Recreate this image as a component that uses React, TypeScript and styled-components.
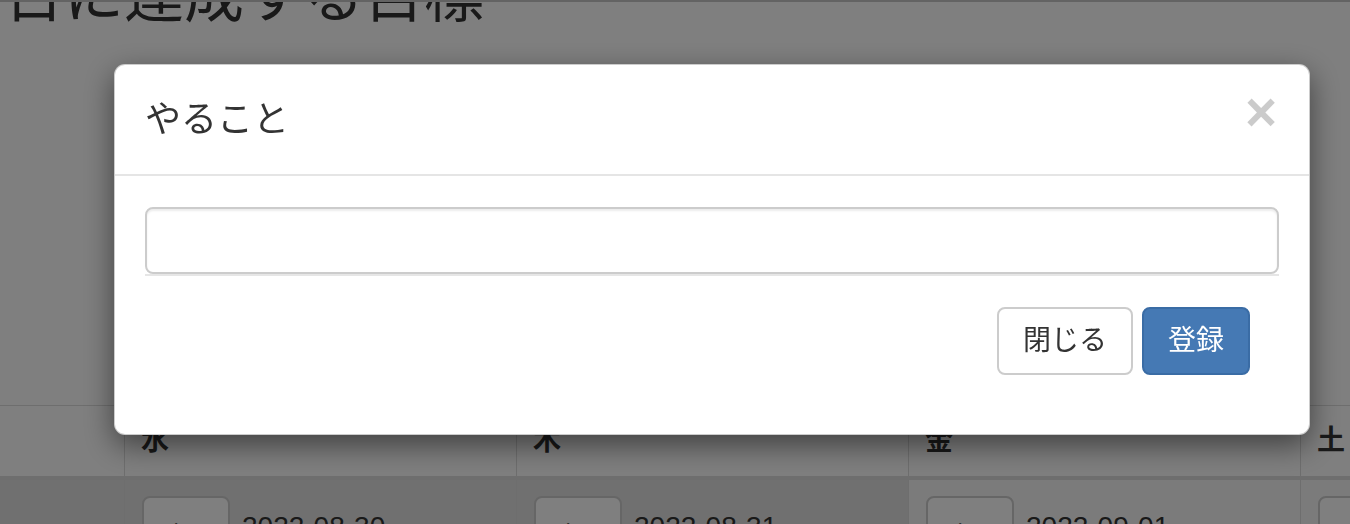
import React from "react";
import styled, { createGlobalStyle } from "styled-components";

const GlobalStyle = createGlobalStyle`
  html, body {
    margin: 0;
    padding: 0;
    overflow: hidden;
    background: #fff;
  }
  body {
    font-family: "Liberation Sans", "Noto Sans CJK JP", sans-serif;
    color: #333;
    font-size: 28px;
    line-height: 1.42857;
  }
`;

const Page = styled.div`
  width: 1350px;
  height: 524px;
  overflow: hidden;
  display: flex;
  flex-direction: column;
`;

const TopLine = styled.div`
  flex: 0 0 2px;
  background: #c6c6c6;
`;

const HeadingArea = styled.div`
  flex: 0 0 403px;
  overflow: hidden;
`;

const Heading = styled.h2`
  margin: -38px 0 0 4px;
  font-size: 60px;
  line-height: 66px;
  font-weight: normal;
  color: #333;
  white-space: nowrap;
`;

const WeekTable = styled.div`
  display: grid;
  grid-template-columns: 124px repeat(4, 392px);
  border-top: 1px solid #ddd;
`;

const HeadCell = styled.div<{ $first?: boolean }>`
  padding: 15px 16px;
  line-height: 40px;
  font-size: 28px;
  font-weight: bold;
  border-left: ${(p) => (p.$first ? "none" : "1px solid #ddd")};
  border-bottom: 4px solid #ddd;
  white-space: nowrap;
`;

const BodyCell = styled.div<{ $first?: boolean; $past?: boolean }>`
  display: flex;
  align-items: flex-start;
  gap: 12px;
  padding: 16px 16px 16px 17px;
  height: 100px;
  background: ${(p) => (p.$past ? "#e0e0e0" : "#f7f7f7")};
  border-left: ${(p) => (p.$first ? "none" : "1px solid #ddd")};
  white-space: nowrap;
`;

const DayButton = styled.button`
  flex: 0 0 88px;
  width: 88px;
  height: 68px;
  box-sizing: border-box;
  border: 2px solid #ccc;
  border-radius: 8px;
  background: #fff;
  color: #333;
  font-family: inherit;
  font-size: 28px;
  line-height: 40px;
  padding: 12px 0 12px 24px;
  text-align: left;
`;

const DateText = styled.span`
  padding-top: 11px;
  font-size: 28px;
  line-height: 40px;
  color: #333;
`;

const Backdrop = styled.div`
  position: fixed;
  inset: 0;
  background: rgba(0, 0, 0, 0.5);
`;

const ModalLayer = styled.div`
  position: fixed;
  inset: 0;
  overflow: hidden;
`;

const Dialog = styled.div`
  width: 1196px;
  margin: 64px 0 0 114px;
`;

const ModalContent = styled.div`
  background: #fff;
  border: 1px solid rgba(0, 0, 0, 0.2);
  border-radius: 11px;
  box-shadow: 0 10px 30px rgba(0, 0, 0, 0.5);
  box-sizing: border-box;
`;

const ModalHeader = styled.div`
  display: flex;
  justify-content: space-between;
  align-items: flex-start;
  padding: 29px 30px;
  border-bottom: 2px solid #e5e5e5;
`;

const ModalTitle = styled.h4`
  margin: 0;
  font-size: 36px;
  line-height: 51px;
  font-weight: normal;
  color: #333;
`;

const CloseButton = styled.button`
  background: none;
  border: 0;
  padding: 0;
  margin: -9px 2px 0 0;
  font-family: "Liberation Sans", sans-serif;
  font-size: 55px;
  font-weight: bold;
  line-height: 1;
  color: #000;
  opacity: 0.2;
  text-shadow: 0 1px 0 #fff;
`;

const ModalBody = styled.div`
  padding: 31px 30px 0;
`;

const FormGroup = styled.div`
  border-bottom: 2px solid #e6e6e6;
`;

const TextInput = styled.input`
  display: block;
  width: 100%;
  height: 67px;
  box-sizing: border-box;
  border: 2px solid #ccc;
  border-radius: 8px;
  box-shadow: inset 0 2px 2px rgba(0, 0, 0, 0.075);
  padding: 12px 24px;
  font-family: inherit;
  font-size: 28px;
  color: #555;
  outline: none;
`;

const ModalFooter = styled.div`
  display: flex;
  justify-content: flex-end;
  gap: 9px;
  padding: 31px 59px 59px 30px;
`;

const ActionButton = styled.button<{ $primary?: boolean }>`
  height: 68px;
  box-sizing: border-box;
  padding: 12px 24px;
  border-radius: 8px;
  border: 2px solid ${(p) => (p.$primary ? "#3a6ca5" : "#ccc")};
  background: ${(p) => (p.$primary ? "#4579b4" : "#fff")};
  color: ${(p) => (p.$primary ? "#fff" : "#333")};
  font-family: inherit;
  font-size: 28px;
  line-height: 40px;
  white-space: nowrap;
`;

const days = [
  { label: "", date: "", past: true, first: true },
  { label: "水", date: "2022-08-30", past: true },
  { label: "木", date: "2022-08-31", past: true },
  { label: "金", date: "2022-09-01", past: false },
  { label: "土", date: "2022-09-02", past: false },
];

export default function App() {
  return (
    <>
      <GlobalStyle />
      <Page>
        <TopLine />
        <HeadingArea>
          <Heading>日に達成する目標</Heading>
        </HeadingArea>
        <WeekTable>
          {days.map((d, i) => (
            <HeadCell key={"h" + i} $first={d.first}>
              {d.label}
            </HeadCell>
          ))}
          {days.map((d, i) => (
            <BodyCell key={"b" + i} $first={d.first} $past={d.past}>
              {d.date && (
                <>
                  <DayButton>+</DayButton>
                  <DateText>{d.date}</DateText>
                </>
              )}
            </BodyCell>
          ))}
        </WeekTable>
      </Page>
      <Backdrop />
      <ModalLayer>
        <Dialog>
          <ModalContent>
            <ModalHeader>
              <ModalTitle>やること</ModalTitle>
              <CloseButton aria-label="close">×</CloseButton>
            </ModalHeader>
            <ModalBody>
              <FormGroup>
                <TextInput type="text" />
              </FormGroup>
            </ModalBody>
            <ModalFooter>
              <ActionButton>閉じる</ActionButton>
              <ActionButton $primary>登録</ActionButton>
            </ModalFooter>
          </ModalContent>
        </Dialog>
      </ModalLayer>
    </>
  );
}
